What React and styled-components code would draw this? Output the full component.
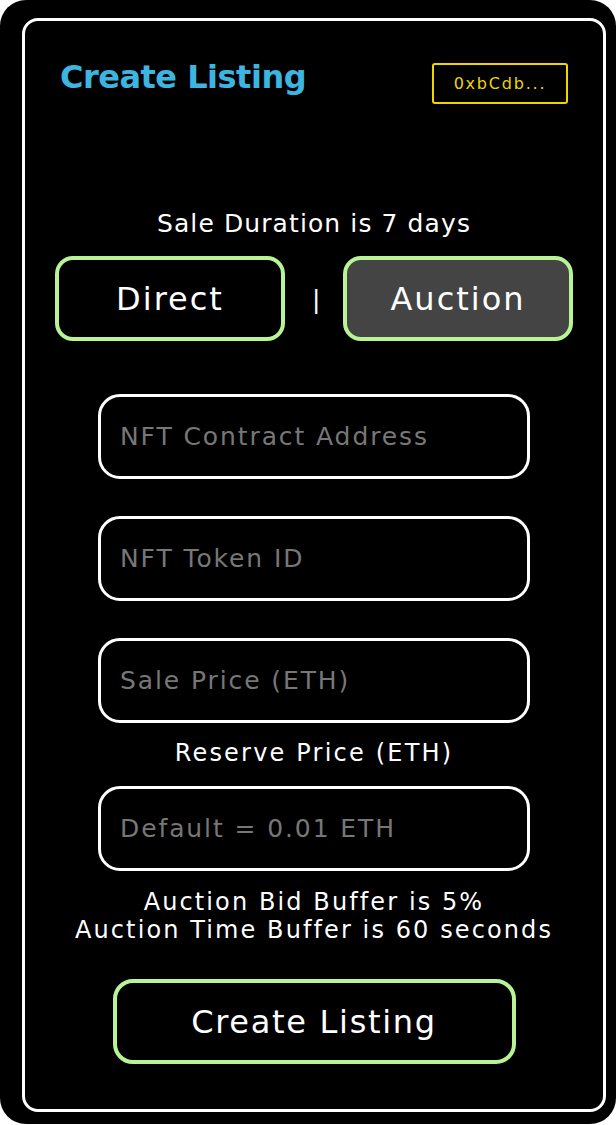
import React, { useState } from 'react';
import styled, { createGlobalStyle } from 'styled-components';

const GlobalStyle = createGlobalStyle`
  html, body {
    margin: 0;
    padding: 0;
    background: #ffffff;
  }
  * {
    box-sizing: border-box;
  }
`;

const font = `'DejaVu Sans', 'Noto Sans', sans-serif`;

const Frame = styled.div`
  width: 616px;
  height: 1124px;
  background: #000;
  border-radius: 26px;
  padding: 18px 10px 12px 22px;
  font-family: ${font};
`;

const Card = styled.div`
  height: 100%;
  border: 3px solid #fff;
  border-radius: 16px;
  display: flex;
  flex-direction: column;
  align-items: center;
`;

const Header = styled.div`
  width: 100%;
  display: flex;
  justify-content: space-between;
  align-items: flex-start;
  padding: 40px 35px 0 35px;
`;

const Title = styled.h1`
  margin: 0;
  color: #3cb6e0;
  font-size: 32px;
  font-weight: 700;
  line-height: 32px;
  letter-spacing: -0.5px;
`;

const Wallet = styled.button`
  width: 136px;
  height: 41px;
  margin-top: 2px;
  padding: 0;
  background: transparent;
  border: 2px solid #f2d400;
  border-radius: 3px;
  color: #f2d400;
  font-family: ${font};
  font-size: 16px;
  letter-spacing: 1.8px;
`;

const Note = styled.p`
  margin: ${(p) => p.$mt || 0}px 0 0 0;
  color: #fff;
  font-size: ${(p) => p.$size || 24}px;
  line-height: ${(p) => p.$lh || 27}px;
  letter-spacing: ${(p) => p.$ls || 2.1}px;
  text-align: center;
`;

const Toggle = styled.div`
  display: flex;
  align-items: center;
  gap: 27px;
  margin-top: 19px;
`;

const Choice = styled.button`
  width: 230px;
  height: 85px;
  padding: 0;
  border: 4px solid #b8f496;
  border-radius: 18px;
  background: ${(p) => (p.$active ? '#444444' : '#000000')};
  color: #fff;
  font-family: ${font};
  font-size: 32px;
  letter-spacing: 2px;
  cursor: pointer;
`;

const Divider = styled.span`
  width: 4px;
  color: #fff;
  font-size: 25px;
  line-height: 28px;
  text-align: center;
  margin-top: 2px;
`;

const Input = styled.input`
  width: 432px;
  height: 85px;
  margin-top: ${(p) => p.$mt || 0}px;
  padding: 0 19px;
  background: #000;
  border: 3px solid #fff;
  border-radius: 22px;
  color: #fff;
  font-family: ${font};
  font-size: 25px;
  letter-spacing: 1.9px;
  outline: none;
  &::placeholder {
    color: #777777;
  }
`;

const Submit = styled.button`
  width: 403px;
  height: 85px;
  margin-top: 35px;
  padding: 0;
  border: 4px solid #b8f496;
  border-radius: 20px;
  background: #000;
  color: #fff;
  font-family: ${font};
  font-size: 32px;
  letter-spacing: 1.7px;
  cursor: pointer;
`;

export default function App() {
  const [mode, setMode] = useState('auction');

  return (
    <>
      <GlobalStyle />
      <Frame>
        <Card>
          <Header>
            <Title>Create Listing</Title>
            <Wallet>0xbCdb...</Wallet>
          </Header>
          <Note $mt={106} $size={25} $ls={1.1}>
            Sale Duration is 7 days
          </Note>
          <Toggle>
            <Choice $active={mode === 'direct'} onClick={() => setMode('direct')}>
              Direct
            </Choice>
            <Divider>|</Divider>
            <Choice $active={mode === 'auction'} onClick={() => setMode('auction')}>
              Auction
            </Choice>
          </Toggle>
          <Input $mt={53} placeholder="NFT Contract Address" />
          <Input $mt={37} placeholder="NFT Token ID" />
          <Input $mt={37} placeholder="Sale Price (ETH)" />
          <Note $mt={17} $ls={2.2}>Reserve Price (ETH)</Note>
          <Input $mt={19} placeholder="Default = 0.01 ETH" />
          <Note $mt={17} $lh={28}>
            Auction Bid Buffer is 5%
            <br />
            Auction Time Buffer is 60 seconds
          </Note>
          <Submit>Create Listing</Submit>
        </Card>
      </Frame>
    </>
  );
}
